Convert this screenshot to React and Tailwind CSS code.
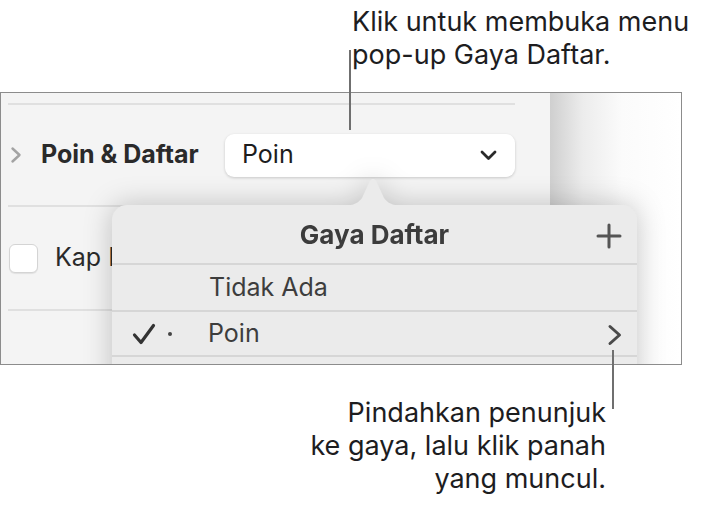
import React from 'react';

const font = { fontFamily: 'Inter, "Noto Sans", sans-serif' };

// small stroked glyphs used in the panel
const Glyph = ({ className, w, h, d, sw = 2.5 }) => (
  <svg className={className} width={w} height={h} viewBox={`0 0 ${w} ${h}`} fill="none">
    <path d={d} stroke="currentColor" strokeWidth={sw} strokeLinecap="round" strokeLinejoin="round" />
  </svg>
);

const PopoverArrow = () => (
  <svg
    className="absolute left-[221px] top-[-27px]"
    width="80"
    height="28"
    viewBox="0 0 80 28"
  >
    <path
      d="M0 28 C18 28 24 27 29 20 L37 3 Q40 -1 43 3 L51 20 C56 27 62 28 80 28 Z"
      fill="#ebebeb"
    />
  </svg>
);

const ListStylePopover = () => (
  <div className="absolute left-[111px] top-[112px] w-[525px] drop-shadow-[0_0_14px_rgba(0,0,0,0.22)]">
    <PopoverArrow />
    <div className="bg-[#ebebeb] rounded-t-[15px] h-[200px]">
      {/* Header */}
      <div className="h-[60px] relative flex items-center justify-center border-b-2 border-[#d6d6d6]">
        <span className="text-[26px] font-bold text-[#3c3c3c]">Gaya Daftar</span>
        <Glyph className="absolute right-[15px] top-[18px] text-[#555]" w={26} h={26} d="M13 2 V24 M2 13 H24" sw={3} />
      </div>
      {/* Rows */}
      <div className="h-[47px] flex items-center pl-[97px] border-b-2 border-[#d6d6d6]">
        <span className="text-[25px] text-[#3d3d3d]">Tidak Ada</span>
      </div>
      <div className="h-[45px] flex items-center border-b-2 border-[#d6d6d6] relative">
        <Glyph className="ml-[20px] text-[#333]" w={24} h={22} d="M2.5 12 L9 19.5 L21.5 2.5" sw={3.2} />
        <span className="ml-[12px] w-[4px] h-[4px] rounded-full bg-[#444]" />
        <span className="ml-[36px] text-[25px] text-[#3d3d3d]">Poin</span>
        <Glyph className="absolute right-[14px] top-[12px] text-[#4a4a4a]" w={16} h={22} d="M3 2.5 L12.5 11 L3 19.5" sw={3} />
      </div>
    </div>
  </div>
);

const App = () => {
  return (
    <div className="w-[708px] h-[505px] bg-white relative overflow-hidden text-[#1d1d1f]" style={font}>
      {/* Top callout */}
      <div className="pl-[352px] pt-[5px] text-[27px] leading-[33px] h-[92px]">
        Klik untuk membuka menu
        <br />
        pop-up Gaya Daftar.
      </div>

      {/* Screenshot frame */}
      <div className="w-[682px] h-[273px] border border-[#8c8c8c] flex relative overflow-hidden">
        {/* Sidebar */}
        <div className="w-[549px] bg-[#f4f4f4] flex flex-col">
          <div className="mt-[10px] ml-[7px] w-[507px] h-[2px] bg-[#e0e0e0]" />
          <div className="h-[100px] flex items-center">
            <Glyph className="ml-[9px] text-[#a3a3a3]" w={12} h={18} d="M2.5 2.5 L9.5 9 L2.5 15.5" sw={2.4} />
            <span className="ml-[19px] text-[25px] font-bold text-[#2a2a2a]">Poin &amp; Daftar</span>
            <div className="ml-auto mr-[35px] w-[290px] h-[43px] bg-white rounded-[9px] shadow-[0_1px_3px_rgba(0,0,0,0.18)] flex items-center pl-[17px] pr-[18px]">
              <span className="text-[25px] text-[#1d1d1d]">Poin</span>
              <Glyph className="ml-auto text-[#2a2a2a]" w={17} h={11} d="M2 2 L8.5 8.5 L15 2" sw={2.8} />
            </div>
          </div>
          <div className="ml-[7px] w-[507px] h-[2px] bg-[#e0e0e0]" />
          <div className="h-[102px] flex items-center">
            <div className="ml-[8px] w-[29px] h-[29px] bg-white rounded-[6px] border border-[#d4d4d4] shadow-[0_1px_1px_rgba(0,0,0,0.08)]" />
            <span className="ml-[17px] text-[25px] text-[#2a2a2a]">Kap Huruf</span>
          </div>
          <div className="ml-[7px] w-[507px] h-[2px] bg-[#e0e0e0]" />
        </div>
        {/* Canvas edge */}
        <div className="flex-1 bg-[linear-gradient(to_right,#cfcfcf,#ececec_25%,#fbfbfb_55%,#ffffff)]" />

        <ListStylePopover />
      </div>

      {/* Bottom callout */}
      <div className="w-[606px] pt-[31px] text-right text-[27px] leading-[33px]">
        Pindahkan penunjuk
        <br />
        ke gaya, lalu klik panah
        <br />
        yang muncul.
      </div>

      {/* Callout lines */}
      <div className="absolute left-[349px] top-[50px] w-[2px] h-[80px] bg-[#6f6f6f]" />
      <div className="absolute left-[612px] top-[350px] w-[2px] h-[59px] bg-[#6f6f6f]" />
    </div>
  );
};

export default App;
